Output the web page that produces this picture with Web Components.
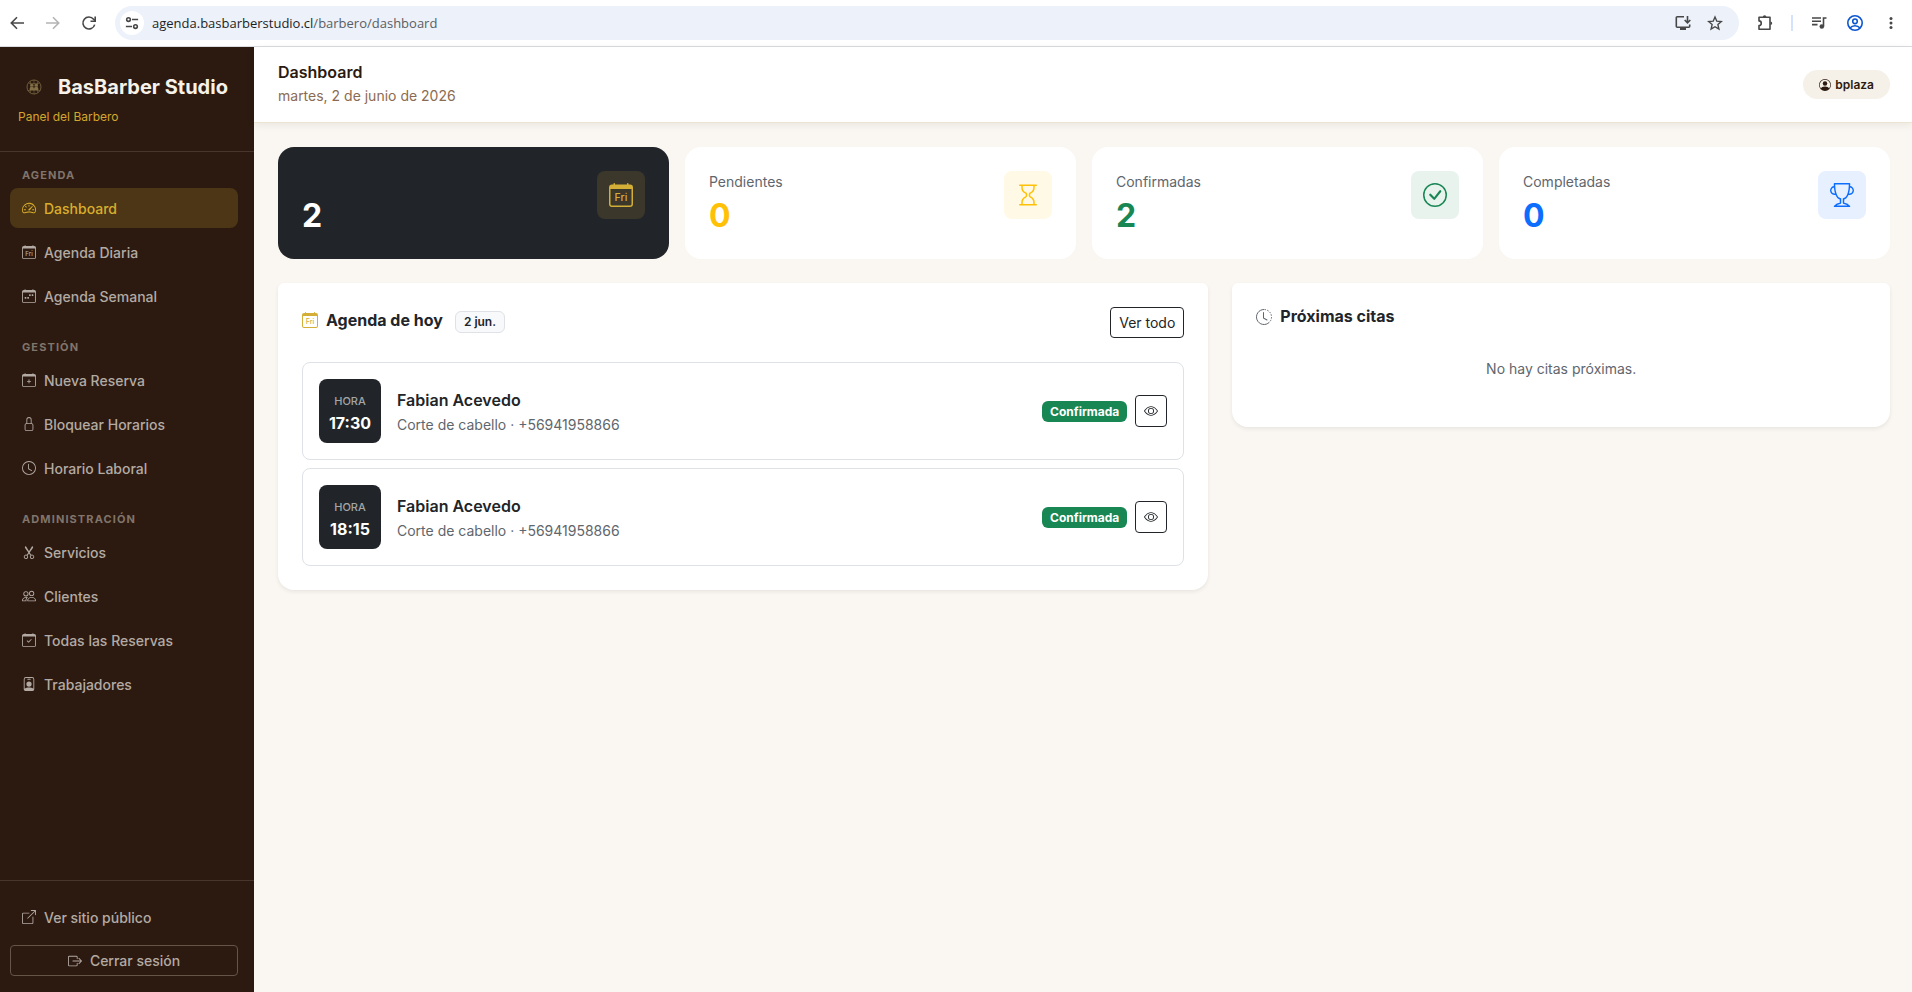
<!DOCTYPE html>
<html lang="es">
<head>
<meta charset="utf-8">
<meta name="viewport" content="width=device-width, initial-scale=1">
<title>Dashboard - BasBarber Studio</title>
<style>
body {
  margin: 0;
  font-family: Inter, "Liberation Sans", sans-serif;
  font-size: 14px;
  line-height: 21px;
  color: #212529;
  background: #faf7f2;
  --gold: #d4af37;
  --brown: #2c1a10;
  --muted: #5f666d;
}
</style>
</head>
<body>
<app-shell>
  <browser-bar slot="browser" host="agenda.basbarberstudio.cl" path="/barbero/dashboard"></browser-bar>

  <side-bar slot="sidebar" brand="BasBarber Studio" subtitle="Panel del Barbero">
    <nav-group label="Agenda">
      <nav-item icon="speedometer" active>Dashboard</nav-item>
      <nav-item icon="calendar-day">Agenda Diaria</nav-item>
      <nav-item icon="calendar-week">Agenda Semanal</nav-item>
    </nav-group>
    <nav-group label="Gestión">
      <nav-item icon="calendar-plus">Nueva Reserva</nav-item>
      <nav-item icon="lock">Bloquear Horarios</nav-item>
      <nav-item icon="clock">Horario Laboral</nav-item>
    </nav-group>
    <nav-group label="Administración">
      <nav-item icon="scissors">Servicios</nav-item>
      <nav-item icon="people">Clientes</nav-item>
      <nav-item icon="calendar-check">Todas las Reservas</nav-item>
      <nav-item icon="person-badge">Trabajadores</nav-item>
    </nav-group>
    <nav-item slot="footer" icon="box-up-right">Ver sitio público</nav-item>
    <logout-button slot="footer">Cerrar sesión</logout-button>
  </side-bar>

  <top-bar heading="Dashboard" date="martes, 2 de junio de 2026">
    <user-pill>bplaza</user-pill>
  </top-bar>

  <dashboard-grid>
    <stat-card slot="stats" variant="dark" icon="calendar-day" value="2"></stat-card>
    <stat-card slot="stats" variant="warning" icon="hourglass" value="0">Pendientes</stat-card>
    <stat-card slot="stats" variant="success" icon="check-circle" value="2">Confirmadas</stat-card>
    <stat-card slot="stats" variant="primary" icon="trophy" value="0">Completadas</stat-card>

    <panel-card slot="main" icon="calendar-day" heading="Agenda de hoy" badge="2 jun." action="Ver todo">
      <cita-item hora="17:30" cliente="Fabian Acevedo" estado="Confirmada">Corte de cabello · +56941958866</cita-item>
      <cita-item hora="18:15" cliente="Fabian Acevedo" estado="Confirmada">Corte de cabello · +56941958866</cita-item>
    </panel-card>

    <panel-card slot="aside" icon="clock-history" heading="Próximas citas">
      <empty-note>No hay citas próximas.</empty-note>
    </panel-card>
  </dashboard-grid>
</app-shell>

<script>
const calendar = '<path d="M3.5 0a.5.5 0 0 1 .5.5V1h8V.5a.5.5 0 0 1 1 0V1h1a2 2 0 0 1 2 2v11a2 2 0 0 1-2 2H2a2 2 0 0 1-2-2V3a2 2 0 0 1 2-2h1V.5a.5.5 0 0 1 .5-.5M1 4v10a1 1 0 0 0 1 1h12a1 1 0 0 0 1-1V4z"/>';

const line = 'fill="none" stroke="currentColor"';

const icons = {
  'calendar-day': `${calendar}<text x="8" y="12" text-anchor="middle" font-size="7" font-weight="500" font-family="Inter, sans-serif">Fri</text>`,
  'calendar-week': `${calendar}<path d="M11 6.5a.5.5 0 0 1 .5-.5h1a.5.5 0 0 1 .5.5v1a.5.5 0 0 1-.5.5h-1a.5.5 0 0 1-.5-.5zm-3 0a.5.5 0 0 1 .5-.5h1a.5.5 0 0 1 .5.5v1a.5.5 0 0 1-.5.5h-1a.5.5 0 0 1-.5-.5zm-5 3a.5.5 0 0 1 .5-.5h1a.5.5 0 0 1 .5.5v1a.5.5 0 0 1-.5.5h-1a.5.5 0 0 1-.5-.5zm3 0a.5.5 0 0 1 .5-.5h1a.5.5 0 0 1 .5.5v1a.5.5 0 0 1-.5.5h-1a.5.5 0 0 1-.5-.5z"/>`,
  'calendar-plus': `${calendar}<path d="M8 7a.5.5 0 0 1 .5.5V9H10a.5.5 0 0 1 0 1H8.5v1.5a.5.5 0 0 1-1 0V10H6a.5.5 0 0 1 0-1h1.5V7.5A.5.5 0 0 1 8 7"/>`,
  'calendar-check': `${calendar}<path d="M10.854 7.146a.5.5 0 0 1 0 .708l-3 3a.5.5 0 0 1-.708 0l-1.5-1.5a.5.5 0 1 1 .708-.708L7.5 9.793l2.646-2.647a.5.5 0 0 1 .708 0"/>`,
  'speedometer': '<path d="M8 4a.5.5 0 0 1 .5.5V6a.5.5 0 0 1-1 0V4.5A.5.5 0 0 1 8 4M3.732 5.732a.5.5 0 0 1 .707 0l.915.914a.5.5 0 1 1-.708.708l-.914-.915a.5.5 0 0 1 0-.707M2 10a.5.5 0 0 1 .5-.5h1.586a.5.5 0 0 1 0 1H2.5A.5.5 0 0 1 2 10m9.5 0a.5.5 0 0 1 .5-.5h1.5a.5.5 0 0 1 0 1H12a.5.5 0 0 1-.5-.5m.754-4.246a.39.39 0 0 0-.527-.02L7.547 9.31a.91.91 0 1 0 1.302 1.258l3.434-4.297a.39.39 0 0 0-.029-.518z"/><path fill-rule="evenodd" d="M0 10a8 8 0 1 1 15.547 2.661c-.442 1.253-1.845 1.602-2.932 1.25C11.309 13.488 9.475 13 8 13c-1.474 0-3.31.488-4.615.911-1.087.352-2.49.003-2.932-1.25A8 8 0 0 1 0 10m8-7a7 7 0 0 0-6.603 9.329c.203.575.923.876 1.68.63C4.397 12.533 6.358 12 8 12s3.604.532 4.923.96c.757.245 1.477-.056 1.68-.631A7 7 0 0 0 8 3"/>',
  'lock': '<path fill-rule="evenodd" d="M8 1a2 2 0 0 1 2 2v4H6V3a2 2 0 0 1 2-2m3 6V3a3 3 0 0 0-6 0v4a2 2 0 0 0-2 2v5a2 2 0 0 0 2 2h6a2 2 0 0 0 2-2V9a2 2 0 0 0-2-2M5 8h6a1 1 0 0 1 1 1v5a1 1 0 0 1-1 1H5a1 1 0 0 1-1-1V9a1 1 0 0 1 1-1"/>',
  'clock': '<path d="M8 3.5a.5.5 0 0 0-1 0V9a.5.5 0 0 0 .252.434l3.5 2a.5.5 0 0 0 .496-.868L8 8.71z"/><path d="M8 16A8 8 0 1 0 8 0a8 8 0 0 0 0 16m7-8A7 7 0 1 1 1 8a7 7 0 0 1 14 0"/>',
  'clock-history': `<path ${line} d="M8 .5a7.5 7.5 0 1 0 5.3 12.8"/><path ${line} stroke-dasharray="1.5 1.3" d="M8.5 .5a7.5 7.5 0 0 1 4.8 12.8"/><path d="M7.5 3a.5.5 0 0 1 .5.5v5.21l3.248 1.856a.5.5 0 0 1-.496.868l-3.5-2A.5.5 0 0 1 7 9V3.5a.5.5 0 0 1 .5-.5"/>`,
  'scissors': '<path d="M3.5 3.5c-.614-.884-.074-1.962.858-2.5L8 7.226 11.642 1c.932.538 1.472 1.616.858 2.5L8.81 8.61l1.556 2.661a2.5 2.5 0 1 1-.794.637L8 9.73l-1.572 2.177a2.5 2.5 0 1 1-.794-.637L7.19 8.61zm2.5 10a1.5 1.5 0 1 0-3 0 1.5 1.5 0 0 0 3 0m7 0a1.5 1.5 0 1 0-3 0 1.5 1.5 0 0 0 3 0"/>',
  'people': '<path d="M15 14s1 0 1-1-1-4-5-4-5 3-5 4 1 1 1 1zm-7.978-1L7 12.996c.001-.264.167-1.03.76-1.72C8.312 10.629 9.282 10 11 10c1.717 0 2.687.63 3.24 1.276.593.69.758 1.457.76 1.72l-.008.002-.014.002zM11 7a2 2 0 1 0 0-4 2 2 0 0 0 0 4m3-2a3 3 0 1 1-6 0 3 3 0 0 1 6 0M6.936 9.28a6 6 0 0 0-1.23-.247A7 7 0 0 0 5 9c-4 0-5 3-5 4q0 1 1 1h4.216A2.24 2.24 0 0 1 5 13c0-1.01.377-2.042 1.09-2.904.243-.294.526-.569.846-.816M4.92 10A5.5 5.5 0 0 0 4 13H1c0-.26.164-1.03.76-1.724.545-.636 1.492-1.256 3.16-1.275ZM1.5 5.5a3 3 0 1 1 6 0 3 3 0 0 1-6 0m3-2a2 2 0 1 0 0 4 2 2 0 0 0 0-4"/>',
  'person-badge': '<path d="M6.5 2a.5.5 0 0 0 0 1h3a.5.5 0 0 0 0-1zM11 8a3 3 0 1 1-6 0 3 3 0 0 1 6 0"/><path d="M4.5 0A2.5 2.5 0 0 0 2 2.5V14a2 2 0 0 0 2 2h8a2 2 0 0 0 2-2V2.5A2.5 2.5 0 0 0 11.5 0zM3 2.5A1.5 1.5 0 0 1 4.5 1h7A1.5 1.5 0 0 1 13 2.5v10.795a4.2 4.2 0 0 0-.776-.492C11.392 12.387 10.063 12 8 12s-3.392.387-4.224.803a4.2 4.2 0 0 0-.776.492z"/>',
  'person-circle': '<path d="M11 6a3 3 0 1 1-6 0 3 3 0 0 1 6 0"/><path fill-rule="evenodd" d="M0 8a8 8 0 1 1 16 0A8 8 0 0 1 0 8m8-7a7 7 0 0 0-5.468 11.37C3.242 11.226 4.805 10 8 10s4.757 1.225 5.468 2.37A7 7 0 0 0 8 1"/>',
  'box-up-right': '<path d="M8.636 3.5a.5.5 0 0 0-.5-.5H1.5A1.5 1.5 0 0 0 0 4.5v10A1.5 1.5 0 0 0 1.5 16h10a1.5 1.5 0 0 0 1.5-1.5V7.864a.5.5 0 0 0-1 0V14.5a.5.5 0 0 1-.5.5h-10a.5.5 0 0 1-.5-.5v-10a.5.5 0 0 1 .5-.5h6.636a.5.5 0 0 0 .5-.5"/><path d="M16 .5a.5.5 0 0 0-.5-.5h-5a.5.5 0 0 0 0 1h3.793L6.146 9.146a.5.5 0 1 0 .708.708L15 1.707V5.5a.5.5 0 0 0 1 0z"/>',
  'box-right': '<path d="M10 12.5a.5.5 0 0 1-.5.5h-8a.5.5 0 0 1-.5-.5v-9a.5.5 0 0 1 .5-.5h8a.5.5 0 0 1 .5.5v2a.5.5 0 0 0 1 0v-2A1.5 1.5 0 0 0 9.5 2h-8A1.5 1.5 0 0 0 0 3.5v9A1.5 1.5 0 0 0 1.5 14h8a1.5 1.5 0 0 0 1.5-1.5v-2a.5.5 0 0 0-1 0z"/><path d="M15.854 8.354a.5.5 0 0 0 0-.708l-3-3a.5.5 0 0 0-.708.708L14.293 7.5H5.5a.5.5 0 0 0 0 1h8.793l-2.147 2.146a.5.5 0 0 0 .708.708z"/>',
  'hourglass': '<path d="M2 1.5a.5.5 0 0 1 .5-.5h11a.5.5 0 0 1 0 1h-1v1a4.5 4.5 0 0 1-2.557 4.06c-.29.139-.443.377-.443.59v.7c0 .213.154.451.443.59A4.5 4.5 0 0 1 12.5 13v1h1a.5.5 0 0 1 0 1h-11a.5.5 0 1 1 0-1h1v-1a4.5 4.5 0 0 1 2.557-4.06c.29-.139.443-.377.443-.59v-.7c0-.213-.154-.451-.443-.59A4.5 4.5 0 0 1 3.5 3V2h-1a.5.5 0 0 1-.5-.5m2.5.5v1a3.5 3.5 0 0 0 1.989 3.158c.533.256 1.011.791 1.011 1.491v.702c0 .7-.478 1.235-1.011 1.491A3.5 3.5 0 0 0 4.5 13v1h7v-1a3.5 3.5 0 0 0-1.989-3.158C8.978 9.586 8.5 9.052 8.5 8.351v-.702c0-.7.478-1.235 1.011-1.491A3.5 3.5 0 0 0 11.5 3V2z"/>',
  'check-circle': '<path d="M8 15A7 7 0 1 1 8 1a7 7 0 0 1 0 14m0 1A8 8 0 1 0 8 0a8 8 0 0 0 0 16"/><path d="m10.97 4.97-.02.022-3.473 4.425-2.093-2.094a.75.75 0 0 0-1.06 1.06L6.97 11.03a.75.75 0 0 0 1.079-.02l3.992-4.99a.75.75 0 0 0-1.071-1.05"/>',
  'trophy': '<path d="M2.5.5A.5.5 0 0 1 3 0h10a.5.5 0 0 1 .5.5q0 .807-.034 1.536a3 3 0 1 1-1.133 5.89c-.79 1.865-1.878 2.777-2.833 3.011v2.173l1.425.356c.194.048.377.135.537.255L13.3 15.1a.5.5 0 0 1-.3.9H3a.5.5 0 0 1-.3-.9l1.838-1.379c.16-.12.343-.207.537-.255L6.5 13.11v-2.173c-.955-.234-2.043-1.146-2.833-3.012a3 3 0 1 1-1.132-5.89A33 33 0 0 1 2.5.5m.099 2.54a2 2 0 0 0 .72 3.935c-.333-1.05-.588-2.346-.72-3.935m10.083 3.935a2 2 0 0 0 .72-3.935c-.133 1.59-.388 2.885-.72 3.935M3.504 1q.01.775.056 1.469c.13 2.028.457 3.546.87 4.667C5.294 9.48 6.484 10 7 10a.5.5 0 0 1 .5.5v2.61a1 1 0 0 1-.757.97l-1.426.356a.5.5 0 0 0-.179.085L4.5 15h7l-.638-.479a.5.5 0 0 0-.18-.085l-1.425-.356a1 1 0 0 1-.757-.97V10.5A.5.5 0 0 1 9 10c.516 0 1.706-.52 2.57-2.864.413-1.12.74-2.64.87-4.667q.045-.694.056-1.469z"/>',
  'eye': '<path d="M16 8s-3-5.5-8-5.5S0 8 0 8s3 5.5 8 5.5S16 8 16 8M1.173 8a13 13 0 0 1 1.66-2.043C4.12 4.668 5.88 3.5 8 3.5s3.879 1.168 5.168 2.457A13 13 0 0 1 14.828 8q-.086.13-.195.288c-.335.48-.83 1.12-1.465 1.755C11.879 11.332 10.119 12.5 8 12.5s-3.879-1.168-5.168-2.457A13 13 0 0 1 1.172 8z"/><path d="M8 5.5a2.5 2.5 0 1 0 0 5 2.5 2.5 0 0 0 0-5M4.5 8a3.5 3.5 0 1 1 7 0 3.5 3.5 0 0 1-7 0"/>',
  // seal with two small figures inside a grid
  'seal': `<circle ${line} stroke-width=".8" cx="8" cy="8" r="7"/><path ${line} stroke-width=".5" d="M3 4.5h10M1.5 11.5h13M8 1v14M4.5 2.5v11M11.5 2.5v11"/><circle cx="5.8" cy="6.3" r="1.5"/><circle cx="10.2" cy="6.3" r="1.5"/><path d="M3.5 11c0-4 4-4 4.5-1 .5-3 4.500-3 4.500 1z"/>`,
  // browser toolbar
  'back': `<path ${line} stroke-width="1.6" d="M15 8H2.5M8 2.3 2.3 8 8 13.7"/>`,
  'forward': `<path ${line} stroke-width="1.6" d="M1 8h12.5M8 2.3 13.7 8 8 13.7"/>`,
  'reload': `<path ${line} stroke-width="1.6" d="M13.7 9.6A6 6 0 1 1 12.6 4.2l1.7 1.7"/><path ${line} stroke-width="1.6" d="M14.2 1.5v4.7H9.5"/>`,
  'tune': `<g ${line} stroke-width="1.8"><circle cx="4" cy="4" r="2.1"/><path d="M8 4h7M1 12h7"/><circle cx="12" cy="12" r="2.1"/></g>`,
  'install': `<path ${line} stroke-width="1.6" d="M9 1.8H2.3a1 1 0 0 0-1 1v8.4a1 1 0 0 0 1 1h11.4a1 1 0 0 0 1-1V9.5M12.5 1v6.5M9.7 5l2.8 2.8L15.3 5"/><path d="M5 12h6v3H5z"/>`,
  'star': `<path ${line} stroke-width="1.4" d="m8 2 1.8 4.2 4.5.4-3.4 3 1 4.4L8 11.7 4.1 14l1-4.4-3.4-3 4.5-.4z"/>`,
  'puzzle': `<path ${line} stroke-width="1.6" stroke-linejoin="round" d="M2 2.3h11v11.9H2v-3.6c3 0 3-4.7 0-4.7z"/><path d="M5.8 2a1.8 1.8 0 0 1 3.6 0zM13.4 6.5a1.8 1.8 0 0 1 0 3.6z"/>`,
  'queue': `<path ${line} stroke-width="1.6" d="M1 3h9M1 6.3h9M1 9.6h5.5M12.5 11.5V3H15.5"/><circle cx="10.8" cy="11.5" r="2.3"/>`,
  'profile': `<g ${line} stroke-width="1.6"><circle cx="8" cy="8" r="7.2"/><circle cx="8" cy="6.3" r="2.3"/><path d="M3 13c2.5-3 7.5-3 10 0"/></g>`,
  'dots': '<circle cx="8" cy="3.5" r="1.5"/><circle cx="8" cy="8" r="1.5"/><circle cx="8" cy="12.5" r="1.5"/>',
};

class BaseElement extends HTMLElement {
  constructor() {
    super();
    this._shadowRoot = this.attachShadow({ mode: 'open' });
  }

  attr(name) {
    return this.getAttribute(name) || '';
  }

  connectedCallback() {
    this._shadowRoot.innerHTML = this.render();
  }
}

class BsIcon extends BaseElement {
  render() {
    const size = this.attr('size') || 16;
    return `
<style>
:host { display: inline-flex; flex: none; }
svg { display: block; fill: currentColor; }
</style>
<svg width="${size}" height="${size}" viewBox="0 0 16 16" aria-hidden="true">${icons[this.attr('name')]}</svg>`;
  }
}

class AppShell extends BaseElement {
  render() {
    return `
<style>
:host {
  display: flex;
  flex-direction: column;
  min-height: 100vh;
}
.body { display: flex; flex: 1; }
main { flex: 1; min-width: 0; }
</style>
<slot name="browser"></slot>
<div class="body">
  <slot name="sidebar"></slot>
  <main><slot></slot></main>
</div>`;
  }
}

class BrowserBar extends BaseElement {
  render() {
    return `
<style>
:host {
  display: flex;
  align-items: center;
  gap: 18px;
  height: 46px;
  padding: 0 13px 0 9px;
  border-bottom: 1px solid #dadce0;
  background: #fff;
  color: #474747;
}
button {
  display: flex;
  padding: 0;
  border: 0;
  background: none;
  color: inherit;
}
button:disabled { color: #b4b4b4; }
.address {
  flex: 1;
  display: flex;
  align-items: center;
  gap: 16px;
  height: 34px;
  padding: 0 16px 0 5px;
  border-radius: 17px;
  background: #ecf1fa;
}
.site {
  width: 24px;
  height: 24px;
  align-items: center;
  justify-content: center;
  border-radius: 50%;
  background: #fff;
}
.nav { display: flex; gap: 20px; }
.url {
  flex: 1;
  margin-left: -8px;
  font: 13px/20px "Open Sans", "Noto Sans", sans-serif;
  color: #5a5e63;
}
.url b { font-weight: 400; color: #1f1f1f; }
.tools { display: flex; align-items: center; gap: 20px; }
.tools hr {
  width: 2px;
  height: 16px;
  margin: 0 -2px;
  border: 0;
  background: #d3e3fd;
}
.profile { color: #0b57d0; }
</style>
<div class="nav">
  <button aria-label="Atrás"><bs-icon name="back"></bs-icon></button>
  <button aria-label="Adelante" disabled><bs-icon name="forward"></bs-icon></button>
  <button aria-label="Recargar"><bs-icon name="reload"></bs-icon></button>
</div>
<div class="address">
  <button class="site" aria-label="Información del sitio"><bs-icon name="tune" size="14"></bs-icon></button>
  <span class="url"><b>${this.attr('host')}</b>${this.attr('path')}</span>
  <button aria-label="Instalar"><bs-icon name="install"></bs-icon></button>
  <button aria-label="Marcador"><bs-icon name="star"></bs-icon></button>
</div>
<div class="tools">
  <button aria-label="Extensiones"><bs-icon name="puzzle"></bs-icon></button>
  <hr>
  <button aria-label="Multimedia"><bs-icon name="queue"></bs-icon></button>
  <button aria-label="Perfil" class="profile"><bs-icon name="profile"></bs-icon></button>
  <button aria-label="Menú"><bs-icon name="dots"></bs-icon></button>
</div>`;
  }
}

class SideBar extends BaseElement {
  render() {
    return `
<style>
:host {
  display: flex;
  flex-direction: column;
  box-sizing: border-box;
  width: 254px;
  flex: none;
  background: var(--brown);
  color: #b3aaa4;
}
header {
  padding: 24px 18px;
  border-bottom: 1px solid #48352b;
}
.brand {
  display: flex;
  align-items: center;
  gap: 16px;
  padding-left: 8px;
  font-size: 20px;
  line-height: 32px;
  font-weight: 700;
  color: #f7f2e9;
}
.brand bs-icon { color: #837047; }
p {
  margin: 4px 0 0;
  font-size: 12px;
  line-height: 20px;
  color: #d4a72c;
}
nav {
  flex: 1;
  display: flex;
  flex-direction: column;
  gap: 22px;
  padding: 14px 16px 24px 10px;
}
footer {
  display: flex;
  flex-direction: column;
  gap: 8px;
  padding: 16px 16px 16px 10px;
  border-top: 1px solid #48352b;
}
</style>
<header>
  <div class="brand"><bs-icon name="seal"></bs-icon><span>${this.attr('brand')}</span></div>
  <p>${this.attr('subtitle')}</p>
</header>
<nav><slot></slot></nav>
<footer><slot name="footer"></slot></footer>`;
  }
}

class NavGroup extends BaseElement {
  render() {
    return `
<style>
:host {
  display: flex;
  flex-direction: column;
  gap: 4px;
}
.label {
  padding-left: 12px;
  font-size: 11px;
  line-height: 18px;
  font-weight: 700;
  letter-spacing: 0.1em;
  text-transform: uppercase;
  color: #80746b;
}
</style>
<div class="label">${this.attr('label')}</div>
<slot></slot>`;
  }
}

class NavItem extends BaseElement {
  render() {
    return `
<style>
:host { display: block; }
a {
  display: flex;
  align-items: center;
  gap: 8px;
  height: 40px;
  padding: 0 12px;
  border-radius: 8px;
  font-weight: 500;
  color: inherit;
  text-decoration: none;
}
:host([active]) a {
  background: #4c3616;
  color: #d9ae2c;
}
</style>
<a href="#"><bs-icon name="${this.attr('icon')}" size="14"></bs-icon><slot></slot></a>`;
  }
}

class LogoutButton extends BaseElement {
  render() {
    return `
<style>
:host { display: block; }
button {
  display: flex;
  align-items: center;
  justify-content: center;
  gap: 8px;
  width: 100%;
  padding: 4px 8px;
  border: 1px solid #655448;
  border-radius: 4px;
  background: none;
  font: inherit;
  font-weight: 500;
  color: inherit;
}
</style>
<button type="button"><bs-icon name="box-right" size="14"></bs-icon><slot></slot></button>`;
  }
}

class TopBar extends BaseElement {
  render() {
    return `
<style>
:host {
  display: flex;
  align-items: center;
  justify-content: space-between;
  padding: 16px 22px 16px 24px;
  border-bottom: 1px solid #ede4d3;
  background: #fff;
  box-shadow: 0 2px 8px rgba(44, 26, 16, 0.08);
}
h1 {
  margin: 0 0 3px;
  font-size: 16px;
  line-height: 19px;
  font-weight: 600;
  color: var(--brown);
}
p { margin: 0; color: #8b6b52; }
</style>
<div>
  <h1>${this.attr('heading')}</h1>
  <p>${this.attr('date')}</p>
</div>
<slot></slot>`;
  }
}

class UserPill extends BaseElement {
  render() {
    return `
<style>
:host {
  display: flex;
  align-items: center;
  gap: 4px;
  padding: 4px 16px;
  border-radius: 16px;
  background: #f5f0e8;
  font-size: 12px;
  font-weight: 600;
  color: var(--brown);
}
</style>
<bs-icon name="person-circle" size="12"></bs-icon><slot></slot>`;
  }
}

class DashboardGrid extends BaseElement {
  render() {
    return `
<style>
:host {
  display: grid;
  gap: 24px;
  padding: 24px 22px 24px 24px;
}
.stats {
  display: grid;
  grid-template-columns: repeat(4, 1fr);
  gap: 16px;
}
.panels {
  display: grid;
  grid-template-columns: repeat(12, 1fr);
  gap: 24px;
  align-items: start;
}
.main { grid-column: span 7; }
.aside { grid-column: span 5; }
</style>
<section class="stats"><slot name="stats"></slot></section>
<section class="panels">
  <div class="main"><slot name="main"></slot></div>
  <div class="aside"><slot name="aside"></slot></div>
</section>`;
  }
}

class StatCard extends BaseElement {
  render() {
    return `
<style>
:host {
  display: flex;
  justify-content: space-between;
  align-items: flex-start;
  padding: 24px;
  border-radius: 16px;
  background: #fff;
}
:host([variant=dark]) { background: #212529; --accent: var(--gold); --tint: #3b372b; --value: #fff; }
:host([variant=warning]) { --accent: #ffc107; --tint: #fff9e6; }
:host([variant=success]) { --accent: #198754; --tint: #e8f3ee; }
:host([variant=primary]) { --accent: #0d6efd; --tint: #e7f0ff; }
.label { min-height: 21px; margin-bottom: 4px; color: var(--muted); }
.value {
  font-size: 32px;
  line-height: 39px;
  font-weight: 700;
  color: var(--value, var(--accent));
}
.icon {
  display: flex;
  align-items: center;
  justify-content: center;
  width: 48px;
  height: 48px;
  border-radius: 8px;
  background: var(--tint);
  color: var(--accent);
}
</style>
<div>
  <div class="label"><slot></slot></div>
  <div class="value">${this.attr('value')}</div>
</div>
<div class="icon"><bs-icon name="${this.attr('icon')}" size="24"></bs-icon></div>`;
  }
}

class PanelCard extends BaseElement {
  render() {
    const badge = this.attr('badge');
    const action = this.attr('action');
    return `
<style>
:host {
  display: block;
  padding: 24px;
  border-radius: 6px 6px 16px 16px;
  background: #fff;
  box-shadow: 0 2px 4px rgba(0, 0, 0, 0.07);
}
header {
  display: flex;
  justify-content: space-between;
  align-items: flex-start;
}
:host([action]) header { margin-bottom: 24px; }
.title { display: flex; align-items: center; }
h2 {
  margin: 0 12px 0 8px;
  font-size: 16px;
  line-height: 19px;
  font-weight: 700;
}
.title bs-icon { color: var(--muted); }
:host([action]) .title bs-icon { color: var(--gold); }
.badge {
  margin-top: 4px;
  padding: 0 8px;
  border: 1px solid #dee2e6;
  border-radius: 6px;
  background: #f8f9fa;
  font-size: 12px;
  line-height: 20px;
  font-weight: 600;
}
button {
  padding: 4px 8px;
  border: 1px solid #212529;
  border-radius: 4px;
  background: none;
  font: inherit;
  color: inherit;
}
.list {
  display: flex;
  flex-direction: column;
  gap: 8px;
}
</style>
<header>
  <div class="title">
    <bs-icon name="${this.attr('icon')}"></bs-icon>
    <h2>${this.attr('heading')}</h2>
    ${badge ? `<span class="badge">${badge}</span>` : ''}
  </div>
  ${action ? `<button type="button">${action}</button>` : ''}
</header>
<div class="list"><slot></slot></div>`;
  }
}

class CitaItem extends BaseElement {
  render() {
    return `
<style>
:host {
  display: flex;
  align-items: center;
  gap: 16px;
  padding: 16px;
  border: 1px solid #dee2e6;
  border-radius: 8px;
}
.hora {
  box-sizing: border-box;
  width: 62px;
  padding: 12px 0 8px;
  border-radius: 8px;
  background: #212529;
  color: #fff;
  text-align: center;
  font-size: 16px;
  line-height: 24px;
  font-weight: 700;
}
.hora small {
  display: block;
  font-size: 11px;
  line-height: 20px;
  font-weight: 500;
  color: #a3a5a7;
}
.info { flex: 1; color: var(--muted); }
.name {
  margin-bottom: 2px;
  font-size: 16px;
  line-height: 24px;
  font-weight: 600;
  color: #212529;
}
.actions {
  display: flex;
  align-items: center;
  gap: 8px;
}
.badge {
  padding: 0 8px;
  border-radius: 6px;
  background: #198754;
  color: #fff;
  font-size: 12px;
  font-weight: 700;
}
button {
  display: flex;
  padding: 8px;
  border: 1px solid #212529;
  border-radius: 4px;
  background: none;
  color: #212529;
}
</style>
<div class="hora"><small>HORA</small>${this.attr('hora')}</div>
<div class="info">
  <div class="name">${this.attr('cliente')}</div>
  <slot></slot>
</div>
<div class="actions">
  <span class="badge">${this.attr('estado')}</span>
  <button type="button" aria-label="Ver cita"><bs-icon name="eye" size="14"></bs-icon></button>
</div>`;
  }
}

class EmptyNote extends BaseElement {
  render() {
    return `
<style>
:host {
  display: block;
  padding: 32px 0 24px;
  text-align: center;
  color: var(--muted);
}
</style>
<slot></slot>`;
  }
}

window.customElements.define('bs-icon', BsIcon);
window.customElements.define('app-shell', AppShell);
window.customElements.define('browser-bar', BrowserBar);
window.customElements.define('side-bar', SideBar);
window.customElements.define('nav-group', NavGroup);
window.customElements.define('nav-item', NavItem);
window.customElements.define('logout-button', LogoutButton);
window.customElements.define('top-bar', TopBar);
window.customElements.define('user-pill', UserPill);
window.customElements.define('dashboard-grid', DashboardGrid);
window.customElements.define('stat-card', StatCard);
window.customElements.define('panel-card', PanelCard);
window.customElements.define('cita-item', CitaItem);
window.customElements.define('empty-note', EmptyNote);
</script>
</body>
</html>
